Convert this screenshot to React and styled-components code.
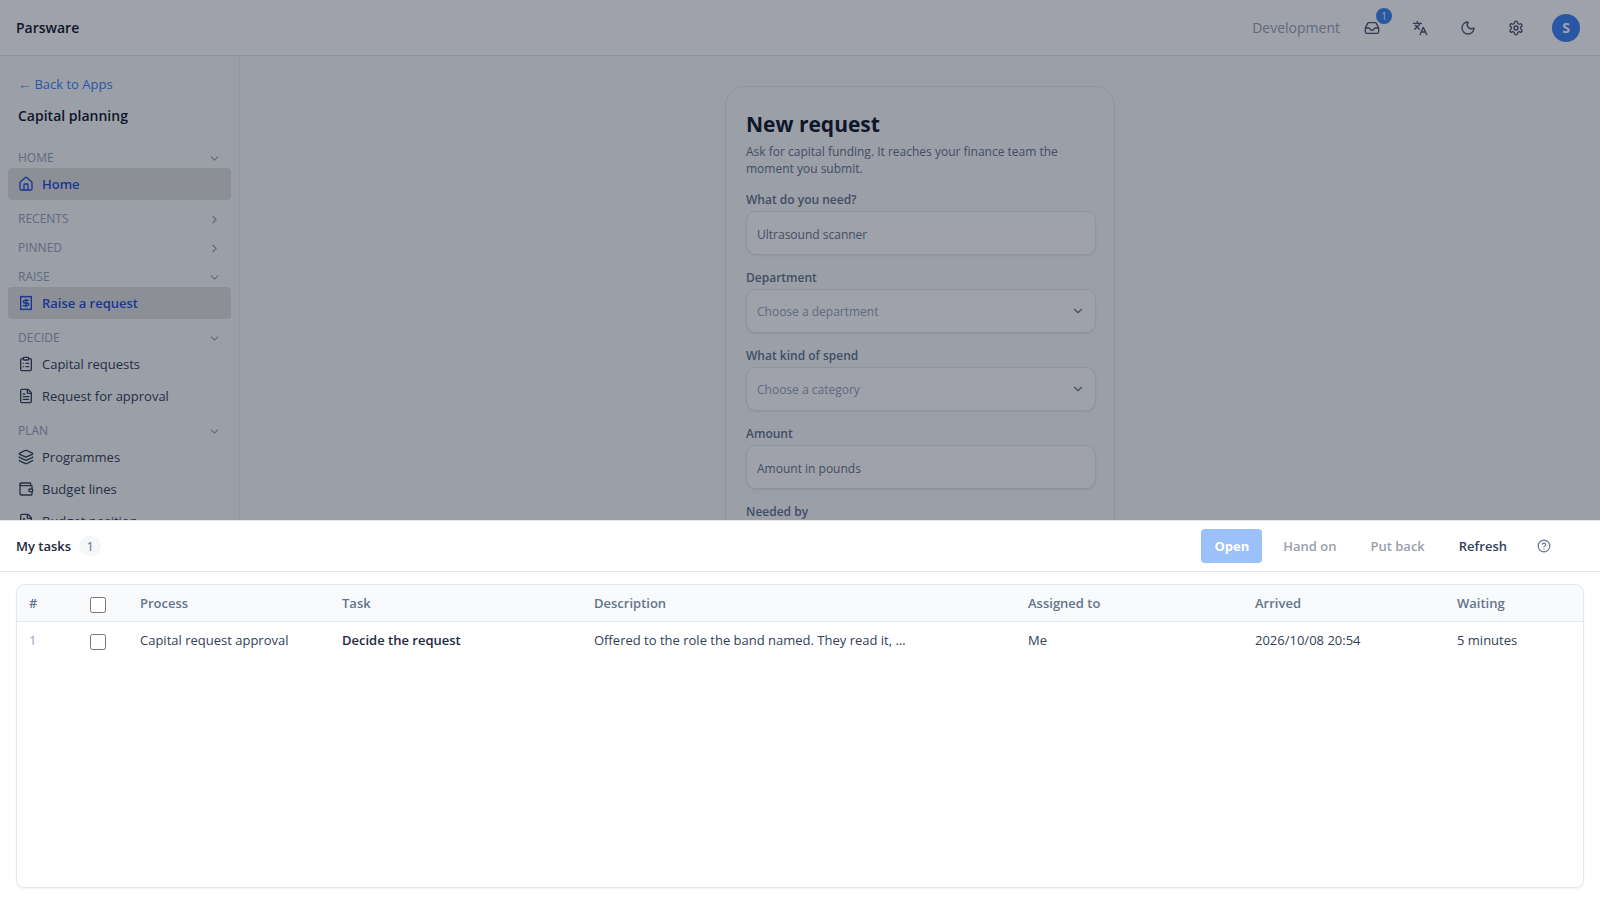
import React from "react";
import styled, { createGlobalStyle } from "styled-components";
import {
  ChevronDown,
  ChevronRight,
  CircleHelp,
  ClipboardList,
  FileText,
  House,
  Inbox,
  Layers,
  Moon,
  Wallet,
} from "lucide-react";

const GlobalStyle = createGlobalStyle`
  *, *::before, *::after { box-sizing: border-box; }
  body {
    margin: 0;
    background: #f8fafc;
    color: #1e293b;
    font-family: "Segoe UI", "Open Sans", "Noto Sans", sans-serif;
    font-size: 13px;
    line-height: 20px;
  }
  button, input, select { font: inherit; color: inherit; }
  h1, h2, p { margin: 0; }
`;

const Page = styled.div`
  display: flex;
  flex-direction: column;
  height: 100vh;
  overflow: hidden;
`;

const TopBar = styled.header`
  display: flex;
  flex: none;
  align-items: center;
  justify-content: space-between;
  height: 56px;
  padding: 0 16px;
  background: #fff;
  border-bottom: 1px solid #e2e8f0;
`;

const Brand = styled.span`
  font-size: 14px;
  font-weight: 600;
  color: #0f172a;
`;

const TopActions = styled.div`
  display: flex;
  align-items: center;
  gap: 16px;
`;

const Environment = styled.span`
  font-size: 14px;
  color: #94a3b8;
`;

const IconButton = styled.button`
  position: relative;
  display: grid;
  place-items: center;
  width: 32px;
  height: 32px;
  padding: 0;
  border: 0;
  background: none;
  color: ${(p) => (p.$muted ? "#64748b" : "#475569")};
`;

const Notice = styled.span`
  position: absolute;
  top: -4px;
  right: -4px;
  width: 16px;
  height: 16px;
  border-radius: 50%;
  background: #3b82f6;
  color: #fff;
  font-size: 10px;
  line-height: 16px;
  text-align: center;
`;

const Avatar = styled.button`
  width: 28px;
  height: 28px;
  margin: 0 4px;
  padding: 0;
  border: 0;
  border-radius: 50%;
  background: #3b82f6;
  color: #fff;
  font-size: 14px;
  font-weight: 700;
`;

const Body = styled.div`
  display: flex;
  flex: 1;
  min-height: 0;
`;

const Sidebar = styled.aside`
  flex: none;
  width: 240px;
  padding: 18px 8px;
  overflow: hidden;
  border-right: 1px solid #e8edf3;
`;

const BackLink = styled.a`
  display: block;
  padding: 0 10px;
  color: #3b82f6;
  text-decoration: none;
`;

const AppName = styled.h2`
  margin: 12px 0 13px;
  padding: 0 10px;
  font-size: 14px;
  font-weight: 600;
  line-height: 20px;
  color: #0f172a;
`;

const SectionToggle = styled.button`
  display: flex;
  align-items: center;
  justify-content: space-between;
  width: 100%;
  height: 29px;
  padding: 9px 10px 0;
  border: 0;
  background: none;
  color: #94a3b8;
  font-size: 12px;
`;

const NavLink = styled.a`
  display: flex;
  align-items: center;
  gap: 8px;
  height: 32px;
  padding: 0 10px;
  border-radius: 4px;
  text-decoration: none;
  color: ${(p) => (p.$active ? "#1d4ed8" : "#334155")};
  background: ${(p) => (p.$active ? "#e0dfdc" : "transparent")};
  font-weight: ${(p) => (p.$active ? 600 : 400)};
`;

const Main = styled.main`
  display: flex;
  flex: 1;
  align-items: flex-start;
  justify-content: center;
  padding-top: 30px;
  overflow: hidden;
`;

const Card = styled.form`
  width: 390px;
  padding: 23px 18px 22px 20px;
  border: 1px solid #e2e8f0;
  border-radius: 20px;
`;

const CardTitle = styled.h1`
  font-size: 21px;
  font-weight: 700;
  line-height: 28px;
  color: #0f172a;
`;

const CardText = styled.p`
  margin: 5px 0 13px;
  font-size: 12px;
  line-height: 17px;
  color: #64748b;
`;

const Field = styled.div`
  display: flex;
  flex-direction: column;
  gap: 1px;
  margin-bottom: 13px;
`;

const Label = styled.label`
  font-size: 12px;
  font-weight: 600;
  color: #64748b;
`;

const TextInput = styled.input`
  height: 44px;
  padding: 2px 10px 0;
  border: 1px solid #e2e8f0;
  border-radius: 10px;
  background: #fff;
  box-shadow: 0 1px 2px rgba(15, 23, 42, 0.08);
  font-size: 12px;
  &::placeholder { color: #64748b; opacity: 1; }
`;

const SelectWrap = styled.div`
  display: grid;
  align-items: center;
  > * { grid-area: 1 / 1; }
  > svg { justify-self: end; margin-right: 11px; color: #64748b; pointer-events: none; }
`;

const Select = styled(TextInput).attrs({ as: "select" })`
  width: 100%;
  appearance: none;
  color: #94a3b8;
`;

const Scrim = styled.div`
  position: fixed;
  inset: 0;
  background: rgba(15, 23, 42, 0.4);
`;

const Drawer = styled.section`
  position: fixed;
  right: 0;
  bottom: 0;
  left: 0;
  display: flex;
  flex-direction: column;
  height: 380px;
  background: #fff;
  border-top: 1px solid #e2e8f0;
`;

const DrawerHeader = styled.div`
  display: flex;
  flex: none;
  align-items: center;
  gap: 8px;
  height: 51px;
  padding: 0 40px 0 16px;
  border-bottom: 1px solid #e2e8f0;
`;

const DrawerTitle = styled.h2`
  font-size: 13px;
  font-weight: 600;
`;

const Count = styled.span`
  min-width: 22px;
  margin-right: auto;
  border-radius: 10px;
  background: #f4f7f7;
  color: #64748b;
  font-size: 13px;
  text-align: center;
`;

const Action = styled.button`
  height: 34px;
  padding: 0 13px;
  border: 0;
  border-radius: 4px;
  font-weight: ${(p) => (p.$primary ? 700 : 600)};
  background: ${(p) => (p.$primary ? "#3b82f6" : "none")};
  color: ${(p) => (p.$primary ? "#fff" : "#334155")};
  &:disabled { opacity: 0.5; }
`;

const TableFrame = styled.div`
  flex: 1;
  margin: 12px 16px;
  overflow: hidden;
  border: 1px solid #e2e8f0;
  border-radius: 8px;
  box-shadow: 0 1px 2px rgba(15, 23, 42, 0.06);
`;

const Table = styled.table`
  width: 100%;
  table-layout: fixed;
  border-collapse: separate;
  border-spacing: 0;
`;

const HeadCell = styled.th`
  height: 37px;
  padding: 0 12px;
  border-bottom: 1px solid #e2e8f0;
  background: #f8fafc;
  color: #64748b;
  font-weight: 600;
  text-align: left;
`;

const Cell = styled.td`
  height: 36px;
  padding: 0 12px;
  overflow: hidden;
  text-overflow: ellipsis;
  white-space: nowrap;
  color: ${(p) => (p.$faint ? "#94a3b8" : p.$strong ? "#1e293b" : "#334155")};
  font-weight: ${(p) => (p.$strong ? 600 : 400)};
`;

const Check = styled.input.attrs({ type: "checkbox" })`
  display: block;
  width: 16px;
  height: 16px;
  margin: 4px 0 0;
`;

const glyph = {
  width: 16,
  height: 16,
  viewBox: "0 0 24 24",
  fill: "none",
  stroke: "currentColor",
  strokeWidth: 2,
  strokeLinecap: "round",
  strokeLinejoin: "round",
  "aria-hidden": true,
};

const ReceiptIcon = () => (
  <svg {...glyph}>
    <path d="M4 2v20l2-1 2 1 2-1 2 1 2-1 2 1 2-1 2 1V2l-2 1-2-1-2 1-2-1-2 1-2-1-2 1Z" />
    <path d="M16 8h-6a2 2 0 1 0 0 4h4a2 2 0 1 1 0 4H8" />
    <path d="M12 17.500V6.500" />
  </svg>
);

const TranslateIcon = () => (
  <svg {...glyph}>
    <path d="M2 5h12M8 2v3M4 14l7-7 1-2M5 8l6 6" />
    <path d="m12 22 5-11 5 11M14 18h6" />
  </svg>
);

const GearIcon = () => (
  <svg {...glyph}>
    <path d="M9.700 4.100a2.300 2.300 0 0 1 4.600 0 2.300 2.300 0 0 0 3.300 1.900 2.300 2.300 0 0 1 2.300 4 2.300 2.300 0 0 0 0 3.900 2.300 2.300 0 0 1-2.300 4 2.300 2.300 0 0 0-3.300 1.900 2.300 2.300 0 0 1-4.600 0 2.300 2.300 0 0 0-3.300-1.900 2.300 2.300 0 0 1-2.300-4 2.300 2.300 0 0 0 0-3.900 2.300 2.300 0 0 1 2.300-4 2.300 2.300 0 0 0 3.300-1.900" />
    <circle cx="12" cy="12" r="3" />
  </svg>
);

const sections = [
  { name: "HOME", open: true, items: [{ text: "Home", icon: House, active: true }] },
  { name: "RECENTS", items: [] },
  { name: "PINNED", items: [] },
  { name: "RAISE", open: true, items: [{ text: "Raise a request", icon: ReceiptIcon, active: true }] },
  {
    name: "DECIDE",
    open: true,
    items: [
      { text: "Capital requests", icon: ClipboardList },
      { text: "Request for approval", icon: FileText },
    ],
  },
  {
    name: "PLAN",
    open: true,
    items: [
      { text: "Programmes", icon: Layers },
      { text: "Budget lines", icon: Wallet },
      { text: "Budget position", icon: FileText },
    ],
  },
];

const fields = [
  { id: "need", label: "What do you need?", hint: "Ultrasound scanner" },
  { id: "department", label: "Department", hint: "Choose a department", choice: true },
  { id: "kind", label: "What kind of spend", hint: "Choose a category", choice: true },
  { id: "amount", label: "Amount", hint: "Amount in pounds" },
  { id: "needed-by", label: "Needed by", hint: "Choose a date" },
];

const columnWidths = [61, 50, 202, 252, 434, 227, 202, 138];
const columns = ["Process", "Task", "Description", "Assigned to", "Arrived", "Waiting"];

export default function App() {
  return (
    <>
      <GlobalStyle />
      <Page>
        <TopBar>
          <Brand>Parsware</Brand>
          <TopActions>
            <Environment>Development</Environment>
            <IconButton aria-label="Inbox">
              <Inbox size={16} />
              <Notice>1</Notice>
            </IconButton>
            <IconButton aria-label="Language"><TranslateIcon /></IconButton>
            <IconButton aria-label="Dark mode"><Moon size={16} /></IconButton>
            <IconButton aria-label="Settings"><GearIcon /></IconButton>
            <Avatar>S</Avatar>
          </TopActions>
        </TopBar>
        <Body>
          <Sidebar>
            <BackLink href="#apps">← Back to Apps</BackLink>
            <AppName>Capital planning</AppName>
            <nav>
              {sections.map((s) => (
                <React.Fragment key={s.name}>
                  <SectionToggle>
                    {s.name}
                    {s.open ? <ChevronDown size={13} /> : <ChevronRight size={13} />}
                  </SectionToggle>
                  {s.items.map(({ text, icon: Icon, active }) => (
                    <NavLink key={text} href="#page" $active={active}>
                      <Icon size={16} />
                      {text}
                    </NavLink>
                  ))}
                </React.Fragment>
              ))}
            </nav>
          </Sidebar>
          <Main>
            <Card>
              <CardTitle>New request</CardTitle>
              <CardText>
                Ask for capital funding. It reaches your finance team the moment you submit.
              </CardText>
              {fields.map((f) => (
                <Field key={f.id}>
                  <Label htmlFor={f.id}>{f.label}</Label>
                  {f.choice ? (
                    <SelectWrap>
                      <Select id={f.id}>
                        <option>{f.hint}</option>
                      </Select>
                      <ChevronDown size={14} />
                    </SelectWrap>
                  ) : (
                    <TextInput id={f.id} placeholder={f.hint} />
                  )}
                </Field>
              ))}
            </Card>
          </Main>
        </Body>
      </Page>
      <Scrim />
      <Drawer>
        <DrawerHeader>
          <DrawerTitle>My tasks</DrawerTitle>
          <Count>1</Count>
          <Action $primary disabled>Open</Action>
          <Action disabled>Hand on</Action>
          <Action disabled>Put back</Action>
          <Action>Refresh</Action>
          <IconButton $muted aria-label="Help"><CircleHelp size={14} /></IconButton>
        </DrawerHeader>
        <TableFrame>
          <Table>
            <colgroup>
              {columnWidths.map((w, i) => <col key={i} width={w} />)}
            </colgroup>
            <thead>
              <tr>
                <HeadCell>#</HeadCell>
                <HeadCell><Check aria-label="Select all" /></HeadCell>
                {columns.map((c) => <HeadCell key={c}>{c}</HeadCell>)}
              </tr>
            </thead>
            <tbody>
              <tr>
                <Cell $faint>1</Cell>
                <Cell><Check aria-label="Select Decide the request" /></Cell>
                <Cell>Capital request approval</Cell>
                <Cell $strong>Decide the request</Cell>
                <Cell>Offered to the role the band named. They read it, …</Cell>
                <Cell>Me</Cell>
                <Cell>2026/10/08 20:54</Cell>
                <Cell>5 minutes</Cell>
              </tr>
            </tbody>
          </Table>
        </TableFrame>
      </Drawer>
    </>
  );
}
